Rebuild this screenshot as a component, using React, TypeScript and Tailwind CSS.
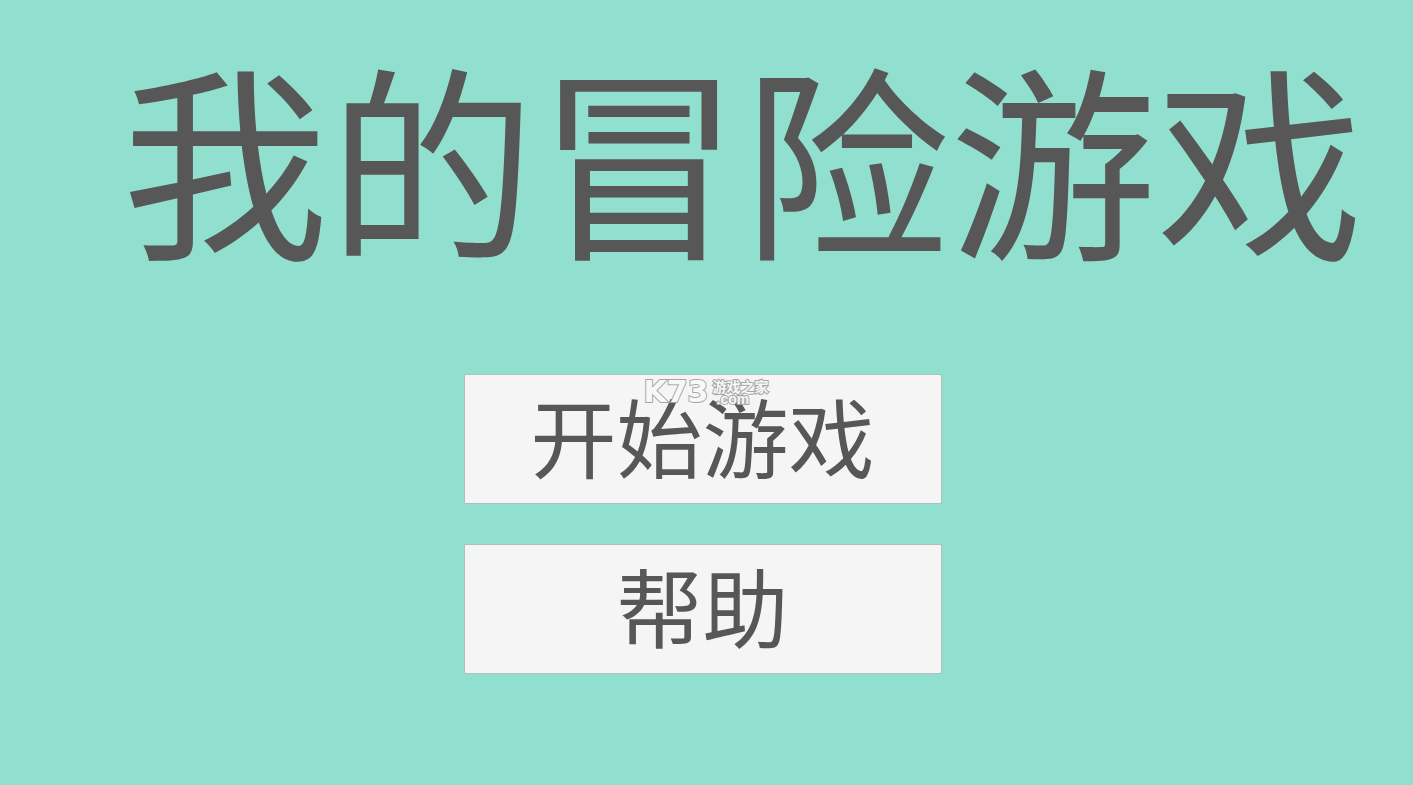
const menuItems = ['开始游戏', '帮助'];

function Watermark() {
  return (
    <div className="pointer-events-none absolute top-1 left-[180px] flex items-center gap-1 font-bold text-[#f8f8f8] [-webkit-text-stroke:2px_#a6a6a6] [paint-order:stroke_fill]">
      <span className="font-['DejaVu_Sans',sans-serif] text-[30px] leading-7">K73</span>
      <span className="flex flex-col text-sm leading-[14px]">
        <span>游戏之家</span>
        <span className="pl-1 font-['Liberation_Sans',sans-serif] leading-3">.com</span>
      </span>
    </div>
  );
}

export default function App() {
  return (
    <main className="min-h-screen overflow-hidden bg-[#91dfce] pb-8 font-['Noto_Sans_CJK_SC',sans-serif] text-[#575757]">
      <h1 className="pt-1 pl-[72px] text-center text-[207px] leading-[300px] whitespace-nowrap">我的冒险游戏</h1>
      <div className="flex justify-center pt-[70px] pr-2">
        <div className="relative w-[478px]">
          <nav className="flex flex-col gap-10">
            {menuItems.map((label) => (
              <button
                key={label}
                type="button"
                className="h-[130px] rounded-xs border border-[#b3bfbb] bg-[#f5f5f5] pb-2 text-[86px] leading-none"
              >
                {label}
              </button>
            ))}
          </nav>
          <Watermark />
        </div>
      </div>
    </main>
  );
}
